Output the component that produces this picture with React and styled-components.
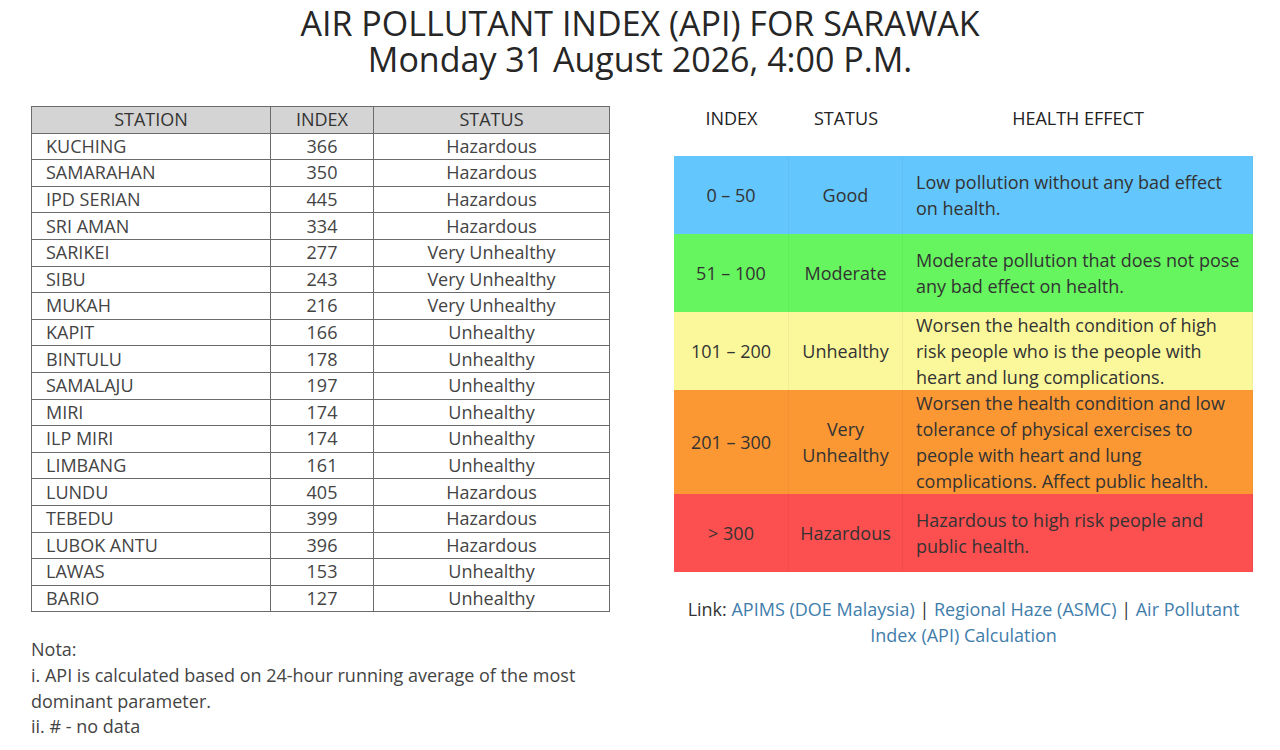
import React from "react";
import styled, { createGlobalStyle } from "styled-components";

const GlobalStyle = createGlobalStyle`
  html, body {
    margin: 0;
    padding: 0;
    background: #ffffff;
  }
  body {
    font-family: "Open Sans", "Liberation Sans", sans-serif;
    color: #333;
  }
`;

const stations = [
  { name: "KUCHING", index: 366, status: "Hazardous" },
  { name: "SAMARAHAN", index: 350, status: "Hazardous" },
  { name: "IPD SERIAN", index: 445, status: "Hazardous" },
  { name: "SRI AMAN", index: 334, status: "Hazardous" },
  { name: "SARIKEI", index: 277, status: "Very Unhealthy" },
  { name: "SIBU", index: 243, status: "Very Unhealthy" },
  { name: "MUKAH", index: 216, status: "Very Unhealthy" },
  { name: "KAPIT", index: 166, status: "Unhealthy" },
  { name: "BINTULU", index: 178, status: "Unhealthy" },
  { name: "SAMALAJU", index: 197, status: "Unhealthy" },
  { name: "MIRI", index: 174, status: "Unhealthy" },
  { name: "ILP MIRI", index: 174, status: "Unhealthy" },
  { name: "LIMBANG", index: 161, status: "Unhealthy" },
  { name: "LUNDU", index: 405, status: "Hazardous" },
  { name: "TEBEDU", index: 399, status: "Hazardous" },
  { name: "LUBOK ANTU", index: 396, status: "Hazardous" },
  { name: "LAWAS", index: 153, status: "Unhealthy" },
  { name: "BARIO", index: 127, status: "Unhealthy" },
];

const levels = [
  { range: "0 – 50", status: "Good", effect: "Low pollution without any bad effect on health.", color: "#63c6fc" },
  { range: "51 – 100", status: "Moderate", effect: "Moderate pollution that does not pose any bad effect on health.", color: "#66f55e" },
  { range: "101 – 200", status: "Unhealthy", effect: "Worsen the health condition of high risk people who is the people with heart and lung complications.", color: "#fbf89c" },
  { range: "201 – 300", status: "Very Unhealthy", effect: "Worsen the health condition and low tolerance of physical exercises to people with heart and lung complications. Affect public health.", color: "#fc9833" },
  { range: "> 300", status: "Hazardous", effect: "Hazardous to high risk people and public health.", color: "#fc4f50" },
];

const Page = styled.div`
  width: 1280px;
  height: 750px;
  overflow: hidden;
`;

const Title = styled.h1`
  margin: 0;
  padding-top: 5px;
  font-size: 34px;
  line-height: 36px;
  font-weight: 400;
  text-align: center;
  color: #262626;
`;

const Columns = styled.div`
  display: flex;
  align-items: flex-start;
  padding: 0 27px 0 31px;
  margin-top: 29px;
  gap: 64px;
`;

const LeftCol = styled.div`
  width: 579px;
  display: flex;
  flex-direction: column;
`;

const RightCol = styled.div`
  flex: 1;
  display: flex;
  flex-direction: column;
`;

const StationTable = styled.table`
  width: 579px;
  border-collapse: collapse;
  font-size: 18px;
  color: #444;
  table-layout: fixed;

  th, td {
    border: 1px solid #6b6b6b;
    height: 25.6px;
    padding: 0;
    line-height: 25px;
    font-weight: 400;
  }
  th {
    background: #d4d4d4;
    color: #333;
  }
`;

const Cell = styled.td`
  text-align: ${(p) => p.$align || "center"};
  padding-left: ${(p) => (p.$align === "left" ? "14px" : "0")} !important;
`;

const Notes = styled.div`
  margin-top: 25px;
  font-size: 18px;
  line-height: 25.7px;
  color: #444;
`;

const LegendHead = styled.div`
  display: grid;
  grid-template-columns: 115px 114px 1fr;
  font-size: 18px;
  color: #222;
  text-align: center;
  height: 24px;
  line-height: 24px;
  margin-bottom: 26px;
`;

const LegendRow = styled.div`
  display: grid;
  grid-template-columns: 115px 114px 1fr;
  min-height: 78px;
  background: ${(p) => p.$bg};
  font-size: 18px;
  line-height: 26px;
  color: #333;
`;

const LegendCell = styled.div`
  display: flex;
  align-items: center;
  justify-content: ${(p) => (p.$left ? "flex-start" : "center")};
  text-align: ${(p) => (p.$left ? "left" : "center")};
  padding: ${(p) => (p.$left ? "0 8px 0 13px" : "0 2px")};
  border-right: 1px solid rgba(0, 0, 0, 0.04);
`;

const LinkLine = styled.p`
  margin: 24px 0 0;
  text-align: center;
  font-size: 18px;
  line-height: 26px;
  color: #333;
`;

const Link = styled.a`
  color: #3f7dab;
  text-decoration: none;
`;

export default function App() {
  return (
    <Page>
      <GlobalStyle />
      <Title>
        AIR POLLUTANT INDEX (API) FOR SARAWAK
        <br />
        Monday 31 August 2026, 4:00 P.M.
      </Title>
      <Columns>
        <LeftCol>
          <StationTable>
            <colgroup>
              <col style={{ width: "239px" }} />
              <col style={{ width: "103px" }} />
              <col />
            </colgroup>
            <thead>
              <tr>
                <th>STATION</th>
                <th>INDEX</th>
                <th>STATUS</th>
              </tr>
            </thead>
            <tbody>
              {stations.map((s) => (
                <tr key={s.name}>
                  <Cell $align="left">{s.name}</Cell>
                  <Cell>{s.index}</Cell>
                  <Cell>{s.status}</Cell>
                </tr>
              ))}
            </tbody>
          </StationTable>
          <Notes>
            Nota:
            <br />
            i. API is calculated based on 24-hour running average of the most dominant parameter.
            <br />
            ii. # - no data
          </Notes>
        </LeftCol>
        <RightCol>
          <LegendHead>
            <div>INDEX</div>
            <div>STATUS</div>
            <div>HEALTH EFFECT</div>
          </LegendHead>
          {levels.map((l) => (
            <LegendRow key={l.range} $bg={l.color}>
              <LegendCell>{l.range}</LegendCell>
              <LegendCell>{l.status === "Very Unhealthy" ? <span>Very<br />Unhealthy</span> : l.status}</LegendCell>
              <LegendCell $left>{l.effect}</LegendCell>
            </LegendRow>
          ))}
          <LinkLine>
            Link: <Link href="#">APIMS (DOE Malaysia)</Link> | <Link href="#">Regional Haze (ASMC)</Link> |{" "}
            <Link href="#">Air Pollutant Index (API) Calculation</Link>
          </LinkLine>
        </RightCol>
      </Columns>
    </Page>
  );
}
